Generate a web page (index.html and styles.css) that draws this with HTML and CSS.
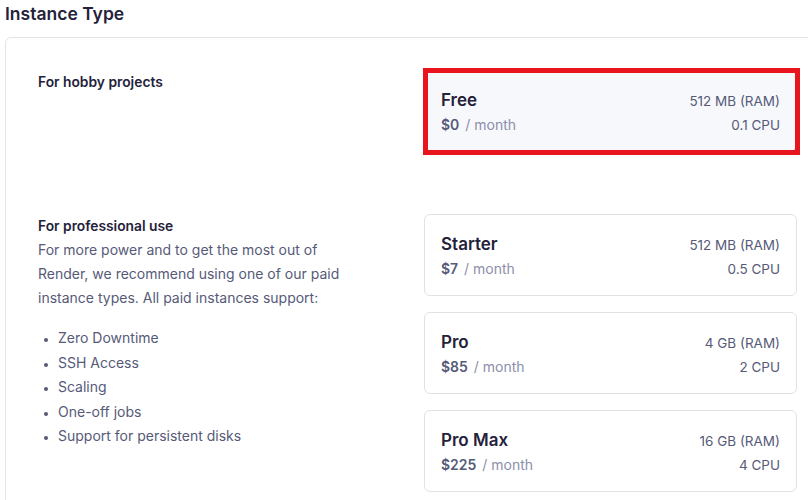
FILE: index.html
```html
<!DOCTYPE html>
<html>
<head>
<meta charset="utf-8">
<link rel="stylesheet" href="styles.css">
</head>
<body>
<h2 class="title">Instance Type</h2>
<div class="panel">
  <div class="row">
    <div class="info">
      <div class="info-title">For hobby projects</div>
    </div>
    <div class="cards">
      <div class="card selected">
        <div class="card-line">
          <span class="name">Free</span>
          <span class="spec">512 MB (RAM)</span>
        </div>
        <div class="card-line">
          <span class="price"><b>$0</b> <span class="per">/ month</span></span>
          <span class="spec">0.1 CPU</span>
        </div>
      </div>
    </div>
  </div>
  <div class="row pro">
    <div class="info">
      <div class="info-title">For professional use</div>
      <p class="desc">For more power and to get the most out of Render, we recommend using one of our paid instance types. All paid instances support:</p>
      <ul class="features">
        <li>Zero Downtime</li>
        <li>SSH Access</li>
        <li>Scaling</li>
        <li>One-off jobs</li>
        <li>Support for persistent disks</li>
      </ul>
    </div>
    <div class="cards">
      <div class="card">
        <div class="card-line">
          <span class="name">Starter</span>
          <span class="spec">512 MB (RAM)</span>
        </div>
        <div class="card-line">
          <span class="price"><b>$7</b> <span class="per">/ month</span></span>
          <span class="spec">0.5 CPU</span>
        </div>
      </div>
      <div class="card">
        <div class="card-line">
          <span class="name">Pro</span>
          <span class="spec">4 GB (RAM)</span>
        </div>
        <div class="card-line">
          <span class="price"><b>$85</b> <span class="per">/ month</span></span>
          <span class="spec">2 CPU</span>
        </div>
      </div>
      <div class="card">
        <div class="card-line">
          <span class="name">Pro Max</span>
          <span class="spec">16 GB (RAM)</span>
        </div>
        <div class="card-line">
          <span class="price"><b>$225</b> <span class="per">/ month</span></span>
          <span class="spec">4 CPU</span>
        </div>
      </div>
    </div>
  </div>
</div>
</body>
</html>
```

FILE: styles.css
```css
* { box-sizing: border-box; }
html, body { margin: 0; padding: 0; overflow: hidden; background: #fff; }
body {
  font-family: Inter, "Liberation Sans", sans-serif;
  color: #24223a;
  width: 808px;
  height: 500px;
}
.title {
  margin: 0;
  padding: 2px 0 0 5px;
  font-size: 17.5px;
  font-weight: 600;
  line-height: 24px;
  height: 37px;
  color: #24223a;
}
.panel {
  margin-left: 5px;
  width: 825px;
  height: 480px;
  border: 1px solid #e4e4e6;
  border-radius: 6px;
  padding: 32px 32px 0 32px;
}
.row {
  display: grid;
  grid-template-columns: 1fr 373px;
  column-gap: 34px;
}
.row.pro { margin-top: 62px; }
.info-title {
  font-size: 13.8px;
  font-weight: 600;
  line-height: 24px;
  color: #24223a;
}
.desc {
  margin: 0;
  font-size: 14px;
  line-height: 24px;
  color: #565a78;
  max-width: 330px;
}
.features {
  margin: 16px 0 0 0;
  padding-left: 20px;
  font-size: 14px;
  line-height: 24.5px;
  color: #565a78;
}
.features li::marker { font-size: 11px; }
.cards {
  display: flex;
  flex-direction: column;
  gap: 16px;
}
.card {
  position: relative;
  border: 1px solid #e2e2e4;
  border-radius: 6px;
  height: 82px;
  padding: 17px 16px 0 16px;
  background: #fff;
}
.card.selected {
  background: #f7f8fc;
  border-color: #8b7ff0;
}
.card.selected::after {
  content: "";
  position: absolute;
  top: -3px;
  left: -2px;
  right: -4px;
  bottom: -4px;
  border: 5px solid #e8141e;
}
.card-line {
  display: flex;
  justify-content: space-between;
  align-items: baseline;
}
.name {
  font-size: 17px;
  font-weight: 600;
  line-height: 24px;
  color: #24223a;
}
.spec {
  font-size: 13.5px;
  line-height: 23px;
  color: #565a78;
}
.price {
  font-size: 14px;
  line-height: 23px;
  color: #565a78;
}
.price b { font-weight: 600; }
.per { color: #8c8fab; margin-left: 2px; }
```
